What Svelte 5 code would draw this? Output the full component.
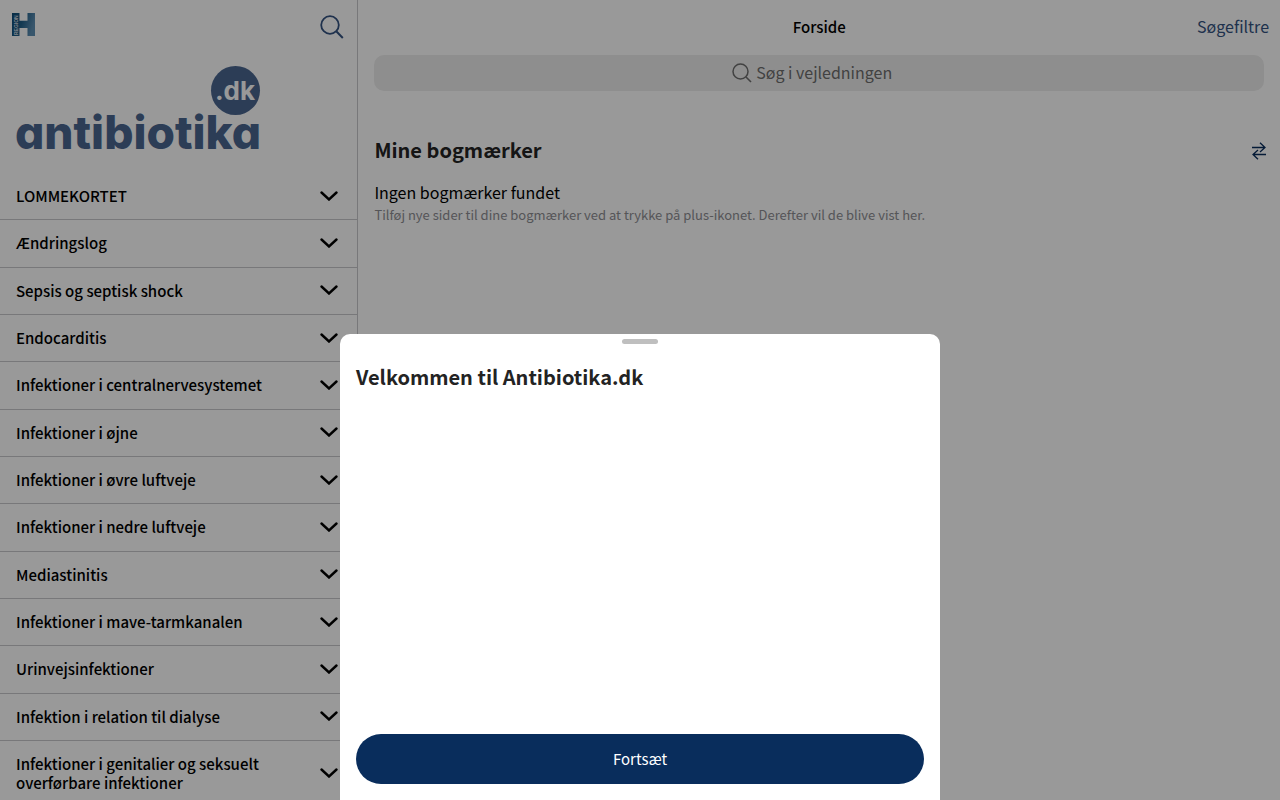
<script>
  const chapters = [
    'LOMMEKORTET',
    'Ændringslog',
    'Sepsis og septisk shock',
    'Endocarditis',
    'Infektioner i centralnervesystemet',
    'Infektioner i øjne',
    'Infektioner i øvre luftveje',
    'Infektioner i nedre luftveje',
    'Mediastinitis',
    'Infektioner i mave-tarmkanalen',
    'Urinvejsinfektioner',
    'Infektion i relation til dialyse',
    'Infektioner i genitalier og seksuelt overførbare infektioner'
  ];
  let sheetOpen = $state(true);
  let query = $state('');
</script>

<div class="app">
  <aside class="sidebar">
    <header class="side-bar-top">
      <svg class="region" viewBox="0 0 23 23" role="img" aria-label="Region H">
        <defs>
          <linearGradient id="h-fill" x1="0" y1="0" x2="1" y2="0.3">
            <stop offset="0" stop-color="#0d4a75" />
            <stop offset="0.5" stop-color="#1f5f88" />
            <stop offset="1" stop-color="#5e8fb4" />
          </linearGradient>
        </defs>
        <path d="M0 0h7.500v7.700h8V0H23v23h-7.500v-8h-8v8H0z" fill="url(#h-fill)" />
        <text class="region-text" transform="translate(5.800 22) rotate(-90)">REGION</text>
      </svg>
      <button class="icon-button" aria-label="Søg">
        <svg viewBox="0 0 24 24" width="24" height="24" fill="none" stroke="currentColor">
          <circle cx="10" cy="10" r="8.800" stroke-width="1.800" />
          <path d="M16.500 16.500 22.800 23" stroke-width="2" />
        </svg>
      </button>
    </header>

    <svg class="logo" viewBox="0 0 246 88" role="img" aria-label="antibiotika.dk">
      <circle cx="219.500" cy="25.500" r="24.500" />
      <text class="logo-dk" x="219" y="35" text-anchor="middle">.dk</text>
      <text class="logo-name" x="-1" y="84">antibiotika</text>
    </svg>

    <nav>
      <ul>
        {#each chapters as chapter}
          <li>
            <button class="chapter">
              <span>{chapter}</span>
              <svg viewBox="0 0 18 10" width="18" height="10" fill="none" stroke="currentColor" stroke-width="2.400" stroke-linecap="round">
                <path d="M1.500 1.500 9 8.500l7.500-7" />
              </svg>
            </button>
          </li>
        {/each}
      </ul>
    </nav>
  </aside>

  <main>
    <header class="navbar">
      <h1>Forside</h1>
      <a href="#filtre">Søgefiltre</a>
    </header>

    <label class="search">
      <svg viewBox="0 0 20 20" width="20" height="20" fill="none" stroke="currentColor">
        <circle cx="8.500" cy="8.500" r="7.500" stroke-width="1.500" />
        <path d="M14 14l5 5" stroke-width="1.600" />
      </svg>
      <input type="text" placeholder="Søg i vejledningen" aria-label="Søg i vejledningen" bind:value={query} />
    </label>

    <section class="bookmarks">
      <div class="section-head">
        <h2>Mine bogmærker</h2>
        <button class="swap" aria-label="Omarranger">
          <svg viewBox="0 0 14 18" width="14" height="18" fill="none" stroke="currentColor" stroke-width="1.300">
            <path d="M0 5.500h13M8 .700 13 5.500 8 10M14 12.500H1M6 8 1 12.500l5 4.800" />
          </svg>
        </button>
      </div>
      <p class="empty">Ingen bogmærker fundet</p>
      <p class="hint">Tilføj nye sider til dine bogmærker ved at trykke på plus-ikonet. Derefter vil de blive vist her.</p>
    </section>
  </main>

  {#if sheetOpen}
    <div class="backdrop"></div>
    <div class="sheet" role="dialog" aria-modal="true" aria-labelledby="welcome">
      <div class="handle"></div>
      <h2 id="welcome">Velkommen til Antibiotika.dk</h2>
      <button class="continue" onclick={() => (sheetOpen = false)}>Fortsæt</button>
    </div>
  {/if}
</div>

<style>
  .app {
    display: flex;
    height: 100vh;
    overflow: hidden;
    background: #fff;
    color: #000;
    font-family: 'Noto Sans CJK SC', 'Noto Sans', sans-serif;
    font-size: 16px;
  }
  h1, h2, p, ul { margin: 0; padding: 0; }
  button { border: 0; padding: 0; background: none; color: inherit; font: inherit; cursor: pointer; }
  svg { display: block; flex: none; }

  .sidebar {
    flex: none;
    box-sizing: border-box;
    width: 28%;
    border-right: 1px solid #c8c8cc;
    overflow: hidden;
  }
  .side-bar-top {
    display: flex;
    align-items: flex-start;
    justify-content: space-between;
    box-sizing: border-box;
    height: 65px;
    padding: 13px 13px 0 12px;
  }
  .region { width: 23px; height: 23px; overflow: visible; }
  .region-text { font: 700 5px 'Liberation Sans', sans-serif; fill: #d5dce4; }
  .icon-button { margin-top: 2px; color: #345381; }
  .logo { width: 246px; height: 88px; margin-left: 16px; fill: #4a6690; overflow: visible; }
  .logo-name { font: 800 46px Inter, sans-serif; font-feature-settings: 'cv11'; }
  .logo-dk { font: 700 26px Inter, sans-serif; fill: #fff; }

  nav { padding-top: 20px; }
  ul { list-style: none; }
  .chapter {
    display: flex;
    align-items: center;
    justify-content: space-between;
    gap: 44px;
    box-sizing: border-box;
    width: 100%;
    padding: 13px 19px 14px 16px;
    border-bottom: 1px solid #c8c8cc;
    text-align: left;
    font-size: 15px;
    font-weight: 500;
    line-height: 1.29;
  }

  main { flex: 1; min-width: 0; }
  .navbar {
    display: grid;
    grid-template-columns: 1fr auto 1fr;
    align-items: center;
    box-sizing: border-box;
    height: 55px;
    padding: 0 11px 3px;
  }
  .navbar h1 { grid-column: 2; font-size: 15px; font-weight: 500; }
  .navbar a { justify-self: end; color: #345381; text-decoration: none; }
  .search {
    display: flex;
    align-items: center;
    justify-content: center;
    gap: 4px;
    height: 36px;
    margin: 0 16px;
    padding-right: 14px;
    box-sizing: border-box;
    border-radius: 10px;
    background: #ededed;
    color: #6e6e6e;
  }
  .search input {
    field-sizing: content;
    border: 0;
    padding: 0 0 2px;
    outline: 0;
    background: none;
    color: inherit;
    font: inherit;
  }
  .search input::placeholder { color: inherit; opacity: 1; }

  .bookmarks { padding: 43px 14px 0 16px; }
  .section-head { display: flex; align-items: center; justify-content: space-between; }
  h2 { color: #232323; font-size: 20px; line-height: 32px; font-weight: 700; }
  .swap { padding-top: 2px; color: #092d5c; }
  .empty { margin-top: 15px; line-height: 22px; }
  .hint { color: #8e8e93; font-size: 13px; line-height: 24px; }

  .backdrop { position: fixed; inset: 0; background: rgba(0, 0, 0, 0.4); }
  .sheet {
    position: fixed;
    bottom: 0;
    left: 0;
    right: 0;
    display: flex;
    flex-direction: column;
    box-sizing: border-box;
    max-width: 600px;
    min-height: 466px;
    margin: 0 auto;
    padding: 5px 16px 16px;
    border-radius: 10px 10px 0 0;
    background: #fff;
  }
  .handle { align-self: center; width: 36px; height: 5px; border-radius: 3px; background: #bfbfbf; }
  .sheet h2 { margin-top: 17px; }
  .continue {
    height: 50px;
    margin-top: auto;
    padding-bottom: 2px;
    border-radius: 25px;
    background: #092d5c;
    color: #fff;
    font-size: 15px;
  }
</style>
